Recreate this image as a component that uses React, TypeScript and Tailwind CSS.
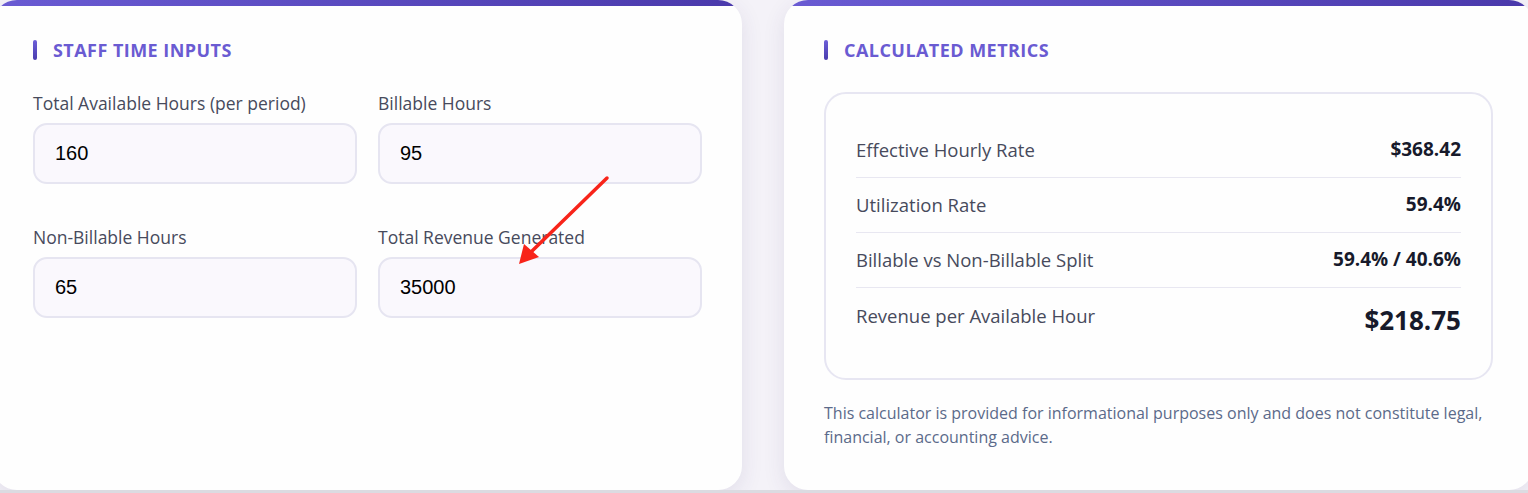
import React from "react";

type Field = { label: string; value: string };

const fields: Field[] = [
  { label: "Total Available Hours (per period)", value: "160" },
  { label: "Billable Hours", value: "95" },
  { label: "Non-Billable Hours", value: "65" },
  { label: "Total Revenue Generated", value: "35000" },
];

const metrics = [
  { label: "Effective Hourly Rate", value: "$368.42" },
  { label: "Utilization Rate", value: "59.4%" },
  { label: "Billable vs Non-Billable Split", value: "59.4% / 40.6%" },
];

function SectionTitle({ children }: { children: React.ReactNode }) {
  return (
    <div className="flex items-center gap-4 h-6">
      <span className="w-1 h-5 rounded-full bg-gradient-to-b from-[#6d5fd8] to-[#4a3cae]" />
      <h2 className="text-[18px] font-bold uppercase tracking-[0.025em] text-[#6a5bd2] leading-6">{children}</h2>
    </div>
  );
}

function Card({ children }: { children: React.ReactNode }) {
  return (
    <div className="w-[749px] h-[490px] shrink-0 bg-[#fefefe] rounded-[24px] overflow-hidden shadow-[0_6px_22px_rgba(60,50,110,0.10)] flex flex-col">
      <div className="h-[6px] bg-gradient-to-r from-[#6a5bd3] to-[#4a39ab]" />
      <div className="px-10 pt-8 flex flex-col">{children}</div>
    </div>
  );
}

export default function App() {
  return (
    <div className="relative h-[493px] w-[1528px] overflow-hidden bg-[#f4f2f8] font-['Open_Sans',sans-serif] flex flex-col">
      <div className="flex gap-[42px] -ml-[7px]">
        <Card>
          <SectionTitle>Staff Time Inputs</SectionTitle>
          <div className="grid grid-cols-2 gap-x-[21px] gap-y-[41px] mt-[29px]">
            {fields.map((f) => (
              <div key={f.label} className="flex flex-col gap-2">
                <label className="text-[17.5px] leading-6 text-[#474a5c]">{f.label}</label>
                <input
                  readOnly
                  value={f.value}
                  className="h-[61px] w-full rounded-[14px] border-2 border-[#e6e5f1] bg-[#faf8fd] pl-5 text-[20px] text-black font-['Liberation_Sans',Arial,sans-serif] outline-none"
                />
              </div>
            ))}
          </div>
        </Card>
        <Card>
          <SectionTitle>Calculated Metrics</SectionTitle>
          <div className="mt-[30px] h-[288px] rounded-[22px] border-2 border-[#e7e6f2] px-[30px] pt-[29px] flex flex-col">
            {metrics.map((m) => (
              <div key={m.label} className="flex justify-between items-center h-[55px] border-b border-[#e8e7f1] pb-px">
                <span className="text-[18.5px] text-[#474a5c]">{m.label}</span>
                <span className="text-[19px] font-bold text-[#171a2b]">{m.value}</span>
              </div>
            ))}
            <div className="flex justify-between items-start pt-[16px]">
              <span className="text-[18.5px] leading-6 text-[#474a5c]">Revenue per Available Hour</span>
              <span className="text-[26px] leading-8 font-bold text-[#171a2b]">$218.75</span>
            </div>
          </div>
          <p className="mt-[21px] text-[16px] leading-6 text-[#5b6a8a]">
            This calculator is provided for informational purposes only and does not constitute legal, financial, or accounting advice.
          </p>
        </Card>
      </div>
      <div className="h-[3px] bg-[#dcdbe1]" />
      <svg className="absolute left-0 top-0 pointer-events-none" width="1528" height="493">
        <line x1="607" y1="178" x2="530" y2="253" stroke="#f8241a" strokeWidth="3.5" strokeLinecap="round" />
        <polygon points="519,264 524,244 539,257" fill="#f8241a" />
      </svg>
    </div>
  );
}
